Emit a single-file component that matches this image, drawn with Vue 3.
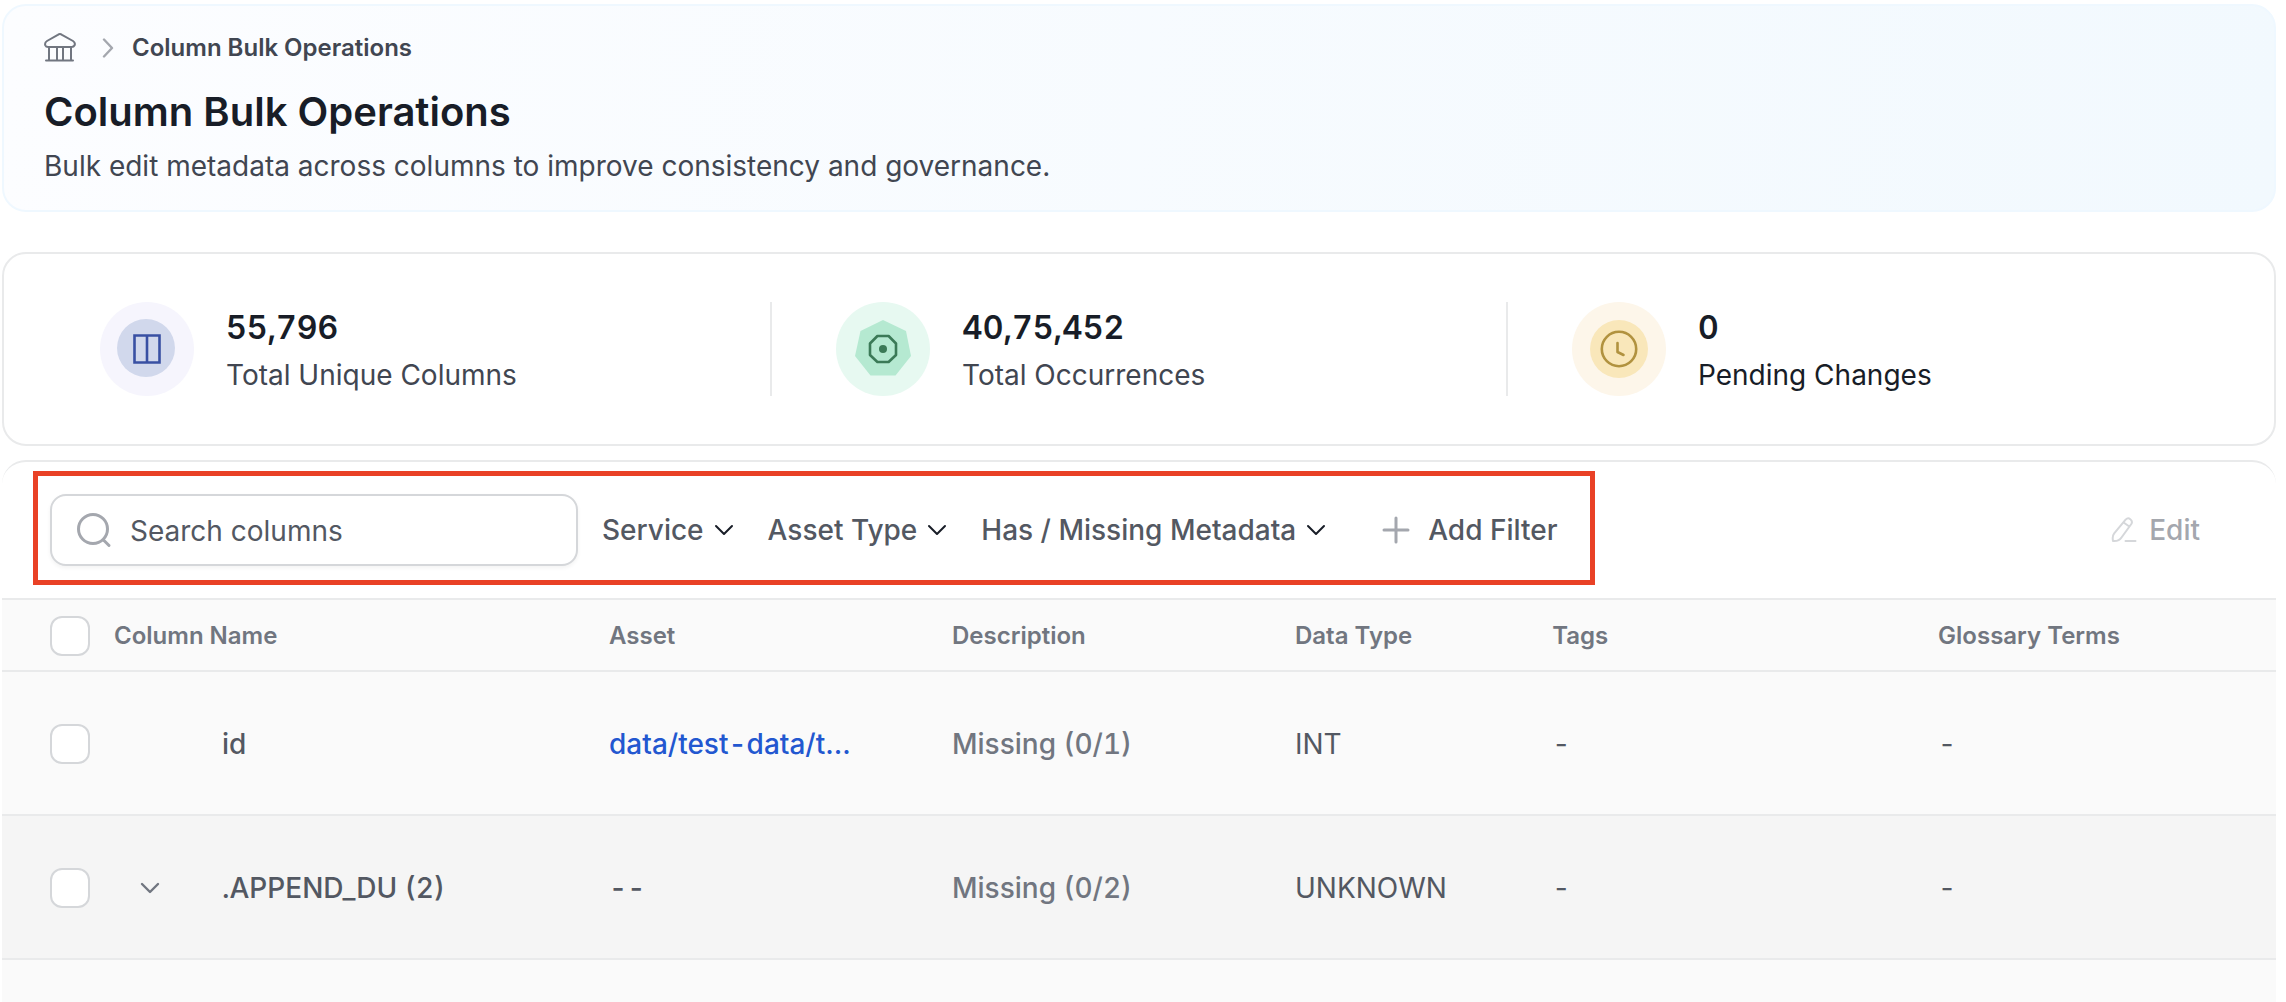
<script setup>
import { ref } from 'vue'

const search = ref('')

const stats = [
  { kind: 'columns', value: '55,796', label: 'Total Unique Columns' },
  { kind: 'occurrences', value: '40,75,452', label: 'Total Occurrences' },
  { kind: 'pending', value: '0', label: 'Pending Changes' },
]

const filters = ['Service', 'Asset Type', 'Has / Missing Metadata']

const headings = ['Column Name', 'Asset', 'Description', 'Data Type', 'Tags', 'Glossary Terms']

const rows = [
  { name: 'id', link: 'data/test-data/t…', description: 'Missing (0/1)', type: 'INT', tags: '-', terms: '-' },
  { name: '.APPEND_DU (2)', expandable: true, asset: '--', description: 'Missing (0/2)', type: 'UNKNOWN', tags: '-', terms: '-' },
]
</script>

<template>
  <main class="page">
    <header class="hero">
      <nav class="breadcrumb" aria-label="Breadcrumb">
        <a href="#" class="home" aria-label="Home">
          <svg width="32" height="32" viewBox="0 0 32 32" fill="none" stroke="#717680" stroke-width="2" stroke-linecap="round" stroke-linejoin="round">
            <path d="M13.4 2.8Q15.5 1.4 17.6 2.8L28.6 9Q31.2 10.7 30.2 13.3Q29.4 15 27.2 15H3.8Q1.6 15 .9 13.3Q0 10.7 2.6 9Z" transform="translate(.4 0)" />
            <path d="M5 15V28M13 15V28M19 15V28M27 15V28M2 28.5H29" />
          </svg>
        </a>
        <svg class="separator" width="12" height="20" viewBox="0 0 12 20" fill="none" stroke="#a4a7ae" stroke-width="2.4" stroke-linecap="round" stroke-linejoin="round">
          <path d="M2 1.500L10 10L2 18.500" />
        </svg>
        <span>Column Bulk Operations</span>
      </nav>
      <h1>Column Bulk Operations</h1>
      <p>Bulk edit metadata across columns to improve consistency and governance.</p>
    </header>

    <section class="stats">
      <div v-for="stat in stats" :key="stat.kind" class="stat">
        <svg v-if="stat.kind === 'columns'" width="94" height="94" viewBox="0 0 94 94" fill="none">
          <circle cx="47" cy="47" r="47" fill="#f6f5fd" />
          <circle cx="46" cy="46" r="29" fill="#d1d8ec" />
          <path d="M34.5 33.5H59.5V60.5H34.5ZM47 33.5V60.5" stroke="#3950a3" stroke-width="2.6" />
        </svg>
        <svg v-else-if="stat.kind === 'occurrences'" width="94" height="94" viewBox="0 0 94 94" fill="none">
          <circle cx="47" cy="47" r="47" fill="#e7f9f1" />
          <path d="M47 18L70 29L75 54L59.5 73.5H34.5L19 54L24.5 29Z" fill="#b5e9d1" />
          <path d="M41.4 34H52.6L60 41.5V53L52.6 60H41.4L34 53V41.5Z" stroke="#3b7a57" stroke-width="2.6" stroke-linejoin="round" />
          <circle cx="47" cy="47" r="4" fill="#3b7a57" />
        </svg>
        <svg v-else width="94" height="94" viewBox="0 0 94 94" fill="none">
          <circle cx="47" cy="47" r="47" fill="#fdf6ea" />
          <circle cx="47" cy="47" r="29" fill="#f9e7ba" />
          <circle cx="47" cy="47" r="17.2" stroke="#b1923f" stroke-width="2.6" />
          <path d="M45.5 41V50L51.5 53" stroke="#b1923f" stroke-width="2.6" stroke-linecap="round" stroke-linejoin="round" />
        </svg>
        <div class="stat-text">
          <strong>{{ stat.value }}</strong>
          <span :class="{ dark: stat.kind === 'pending' }">{{ stat.label }}</span>
        </div>
      </div>
    </section>

    <section class="panel">
      <div class="toolbar">
        <div class="filters">
          <label class="search">
            <svg width="36" height="36" viewBox="0 0 36 36" fill="none" stroke="#a4a7ae" stroke-width="3" stroke-linecap="round">
              <circle cx="17" cy="17" r="14.5" />
              <path d="M28 28.5L33 33.5" />
            </svg>
            <input v-model="search" type="text" placeholder="Search columns" aria-label="Search columns" />
          </label>
          <button v-for="filter in filters" :key="filter" type="button" class="filter">
            {{ filter }}
            <svg width="20" height="12" viewBox="0 0 20 12" fill="none" stroke="#181d27" stroke-width="2" stroke-linecap="round" stroke-linejoin="round">
              <path d="M2 2L10 10L18 2" />
            </svg>
          </button>
          <button type="button" class="add">
            <svg width="28" height="28" viewBox="0 0 28 28" fill="none" stroke="#a4a7ae" stroke-width="3" stroke-linecap="round">
              <path d="M14 2V26M2 14H26" />
            </svg>
            Add Filter
          </button>
        </div>
        <button type="button" class="edit" disabled>
          <svg width="26" height="26" viewBox="0 0 26 26" fill="none" stroke="#d5d7da" stroke-width="2" stroke-linecap="round" stroke-linejoin="round">
            <path d="M14.6 2.6Q17 .2 19.3 2.2Q22 4.200 20.300 7L10.500 20.500Q8 24.500 2 24Q1 19 3.200 16.300ZM12.600 5.500L18.300 9.500M14.500 24H24.500" />
          </svg>
          Edit
        </button>
      </div>

      <table>
        <colgroup>
          <col class="col-check" />
          <col class="col-name" />
          <col class="col-asset" />
          <col class="col-description" />
          <col class="col-type" />
          <col class="col-tags" />
          <col class="col-terms" />
        </colgroup>
        <thead>
          <tr>
            <th class="check"><input type="checkbox" aria-label="Select all columns" /></th>
            <th v-for="(heading, i) in headings" :key="heading" :class="{ name: i === 0 }" scope="col">{{ heading }}</th>
          </tr>
        </thead>
        <tbody>
          <tr v-for="row in rows" :key="row.name" :class="{ group: row.expandable }">
            <td class="check"><input type="checkbox" :aria-label="'Select ' + row.name" /></td>
            <td class="name">
              <div class="name-inner">
                <span class="toggle-slot">
                  <button v-if="row.expandable" type="button" class="toggle" aria-label="Expand">
                    <svg width="20" height="14" viewBox="0 0 20 14" fill="none" stroke="#717680" stroke-width="2.4" stroke-linecap="round" stroke-linejoin="round">
                      <path d="M2 3L10 11L18 3" />
                    </svg>
                  </button>
                </span>
                {{ row.name }}
              </div>
            </td>
            <td class="asset">
              <a v-if="row.link" href="#">{{ row.link }}</a>
              <template v-else>{{ row.asset }}</template>
            </td>
            <td class="description">{{ row.description }}</td>
            <td>{{ row.type }}</td>
            <td>{{ row.tags }}</td>
            <td>{{ row.terms }}</td>
          </tr>
          <tr><td colspan="7"></td></tr>
        </tbody>
      </table>
    </section>
  </main>
</template>

<style>
body {
  background: #fff;
}
</style>

<style scoped>
* {
  box-sizing: border-box;
}

.page {
  height: 100vh;
  overflow: hidden;
  padding: 4px 10px 0 2px;
  font-family: Inter, "Liberation Sans", sans-serif;
  font-size: 28px;
  line-height: 40px;
  color: #535862;
}

button {
  display: flex;
  align-items: center;
  padding: 0;
  border: 0;
  background: none;
  font: inherit;
  font-weight: 500;
  color: inherit;
  white-space: nowrap;
}

svg {
  display: block;
  flex: none;
}

.hero {
  padding: 24px 40px;
  border: 2px solid #eff8ff;
  border-radius: 24px;
  background: linear-gradient(95deg, #fcfdff, #f2f9fe);
  color: #414651;
}

.breadcrumb {
  display: flex;
  align-items: center;
  font-size: 24px;
  line-height: 36px;
  font-weight: 600;
}

.separator {
  margin: 0 18px 0 26px;
}

h1 {
  margin: 16px 0 4px;
  font-size: 40px;
  line-height: 60px;
  font-weight: 600;
  color: #181d27;
}

p {
  margin: 0;
  line-height: 40px;
}

.stats {
  display: flex;
  margin-top: 40px;
  padding: 48px 30px 48px 32px;
  border: 2px solid #e9eaeb;
  border-radius: 24px;
}

.stat {
  flex: 1;
  display: flex;
  align-items: center;
  gap: 32px;
  padding-left: 64px;
}

.stat + .stat {
  box-shadow: -2px 0 #e9eaeb;
}

.stat-text {
  display: flex;
  flex-direction: column;
  gap: 2px;
  color: #414651;
}

.stat-text strong {
  font-size: 32px;
  line-height: 50px;
  font-weight: 600;
  font-variant-numeric: tabular-nums;
  color: #181d27;
}

.stat-text .dark {
  color: #181d27;
}

.panel {
  margin-top: 14px;
  border-top: 2px solid #e9eaeb;
  border-radius: 24px 24px 0 0;
}

.toolbar {
  display: flex;
  align-items: center;
  justify-content: space-between;
  padding: 9px 76px 13px 31px;
}

.filters {
  display: flex;
  align-items: center;
  padding: 18px 32px 14px 12px;
  border: 5px solid #e94126;
}

.search {
  display: flex;
  align-items: center;
  gap: 18px;
  width: 528px;
  height: 72px;
  margin-right: 24px;
  padding: 0 24px;
  border: 2px solid #d5d7da;
  border-radius: 16px;
  background: #fff;
  box-shadow: 0 2px 4px rgba(10, 13, 18, 0.05);
}

.search input {
  flex: 1;
  min-width: 0;
  padding: 2px 0 0;
  border: 0;
  outline: 0;
  background: none;
  font: inherit;
  color: #181d27;
}

.search input::placeholder {
  color: #535862;
  opacity: 1;
}

.filter {
  gap: 10px;
  margin-right: 34px;
}

.add {
  gap: 18px;
  margin-left: 22px;
}

.edit {
  gap: 12px;
  padding-top: 4px;
  color: #a4a7ae;
}

table {
  width: 100%;
  table-layout: fixed;
  border-collapse: separate;
  border-spacing: 0;
  background: #fafafa;
}

.col-check {
  width: 112px;
}

.col-name {
  width: 447px;
}

.col-asset,
.col-description {
  width: 20%;
}

.col-type {
  width: 15%;
}

.col-tags,
.col-terms {
  width: 22.5%;
}

th,
td {
  padding: 2px 48px 0;
  text-align: left;
  white-space: nowrap;
  font-weight: 400;
}

th {
  height: 74px;
  border-top: 2px solid #e9eaeb;
  border-bottom: 2px solid #e9eaeb;
  font-size: 24px;
  font-weight: 600;
  color: #717680;
}

td {
  height: 144px;
  border-bottom: 2px solid #e9eaeb;
  font-variant-numeric: tabular-nums;
}

.check {
  padding-right: 0;
}

.name {
  padding-left: 0;
  padding-right: 0;
}

td.name,
.asset,
.description {
  font-weight: 500;
}

.description {
  color: #717680;
}

.group {
  background: #f5f5f5;
}

.name-inner {
  display: flex;
  align-items: center;
  gap: 36px;
}

.toggle-slot {
  display: flex;
  justify-content: center;
  width: 72px;
}

.asset a {
  color: #2257d0;
  text-decoration: none;
}

input[type='checkbox'] {
  appearance: none;
  display: block;
  width: 40px;
  height: 40px;
  margin: 0;
  border: 2px solid #d5d7da;
  border-radius: 12px;
  background: #fff;
}
</style>
